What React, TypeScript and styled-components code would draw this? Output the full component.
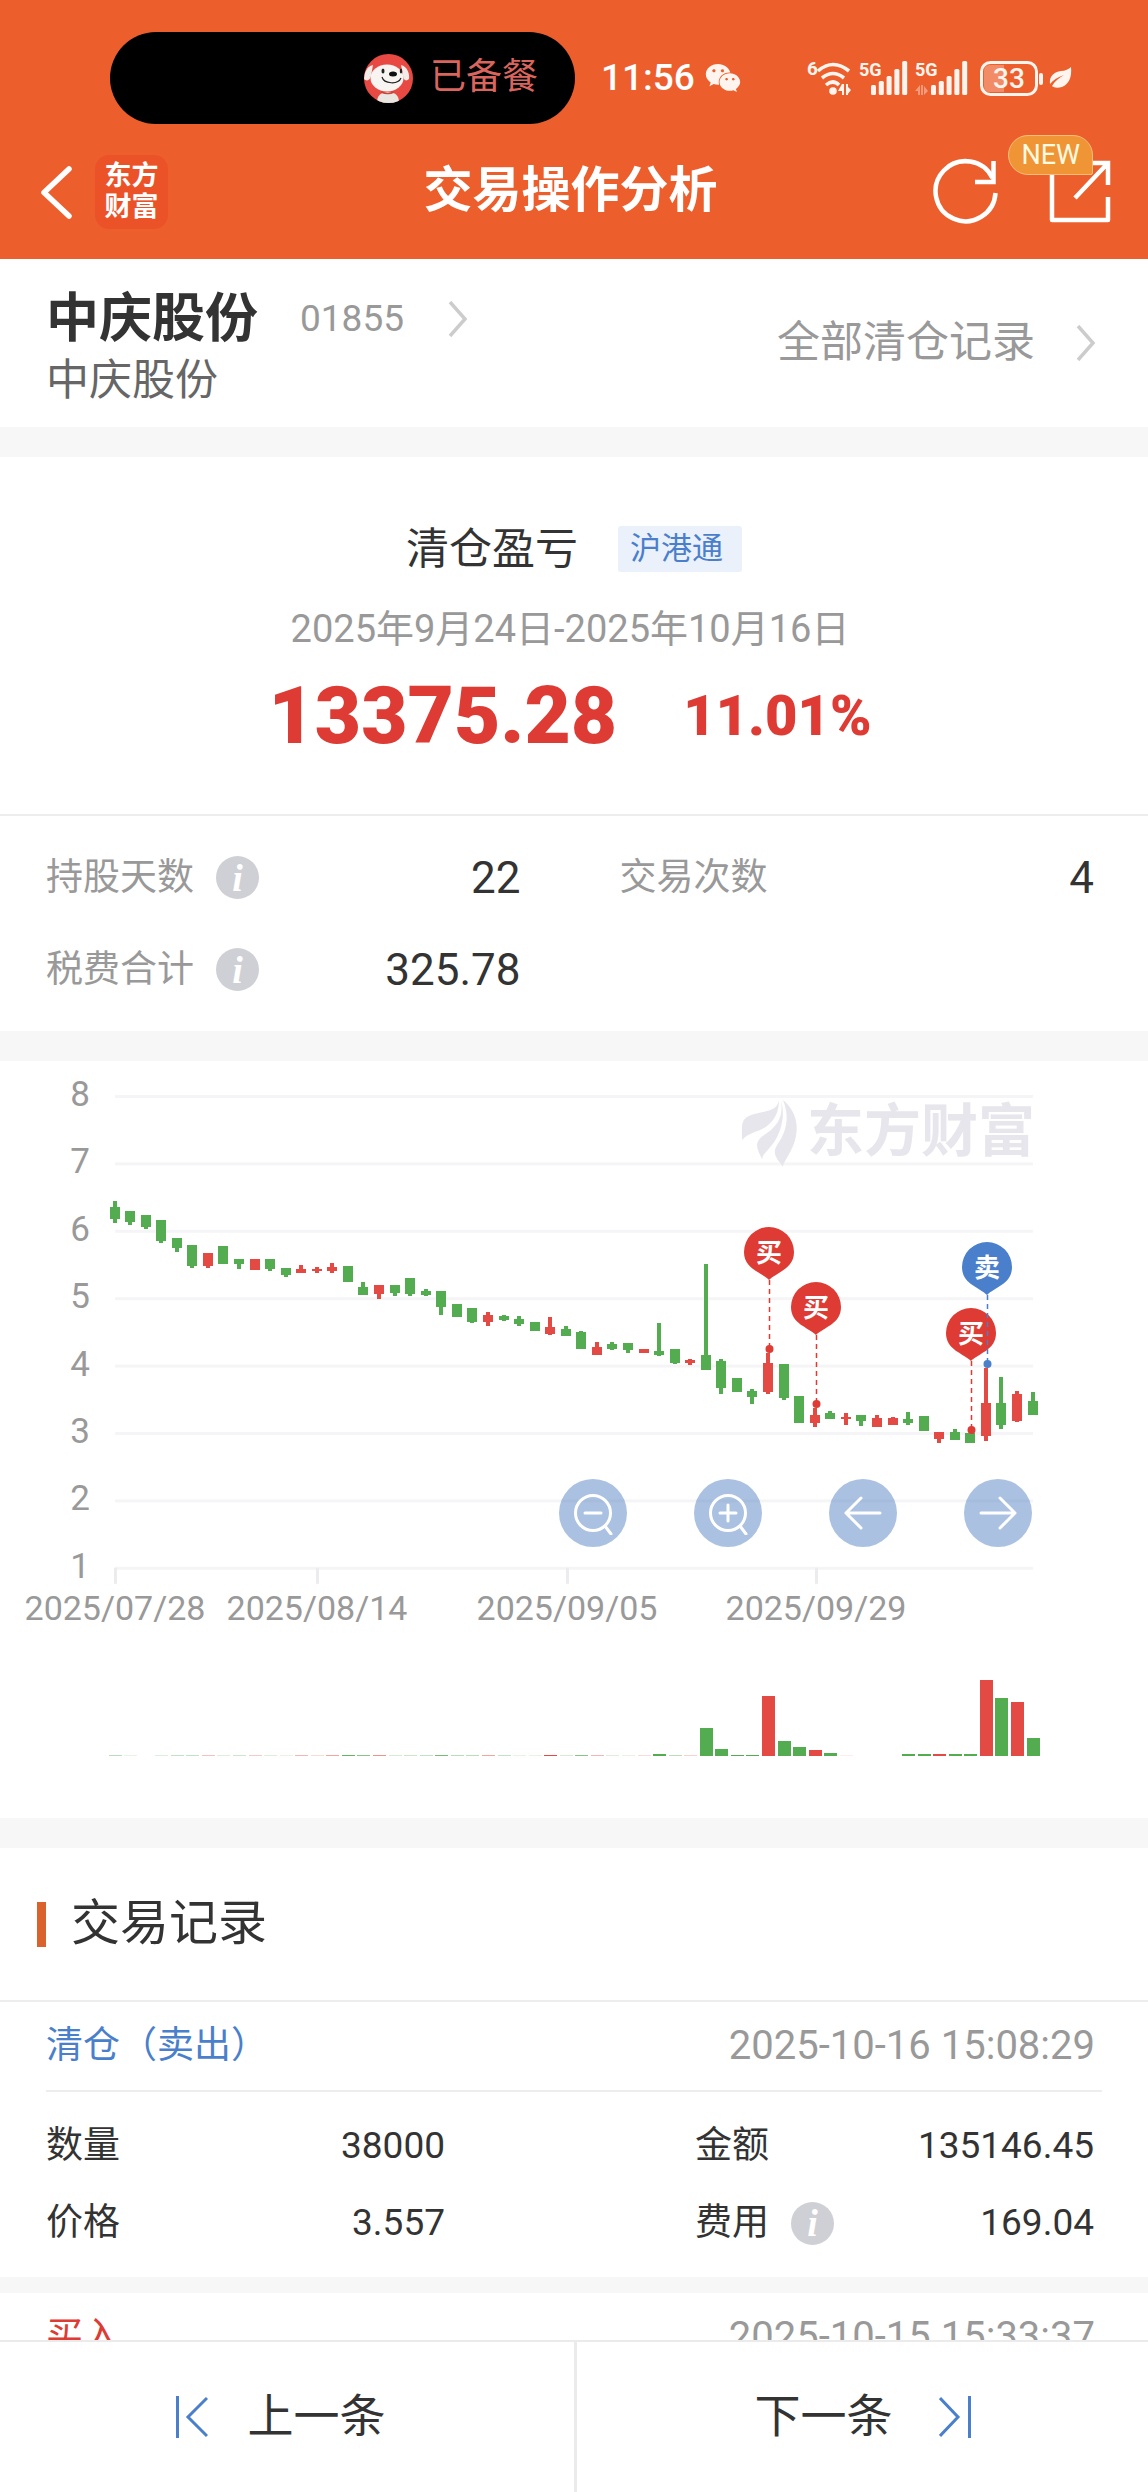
import React from "react";
import styled, { createGlobalStyle } from "styled-components";
import { FaWeixin } from "react-icons/fa";

const C = {
  brand: "#ec5f2d",
  red: "#dd3b33",
  blue: "#4a7fcb",
  candleRed: "#e34a43",
  candleGreen: "#54ac50",
  ink: "#333333",
  sub: "#666666",
  muted: "#999999",
  line: "#ededed",
  band: "#f7f7f7",
};

const FONT = 'Roboto, "Noto Sans CJK SC", sans-serif';

const GlobalStyle = createGlobalStyle`
  *, *::before, *::after { box-sizing: border-box; }
  body { margin: 0; background: #fff; color: ${C.ink}; font-family: ${FONT}; line-height: 1.2; }
  h1, h2, h3, p, dl, dd, dt { margin: 0; font-weight: 400; }
  button { border: 0; padding: 0; background: none; font: inherit; color: inherit; cursor: pointer; }
  a { color: inherit; text-decoration: none; }
  svg { display: block; flex: none; }
`;

const Page = styled.div`
  display: flex;
  flex-direction: column;
  height: 100vh;
  background: #fff;
`;

/* ---------- header ---------- */

const Header = styled.header`
  flex: none;
  background: ${C.brand};
  color: #fff;
`;

const StatusBar = styled.div`
  display: flex;
  align-items: center;
  padding: 32px 76px 0 110px;
`;

const Island = styled.div`
  display: flex;
  align-items: center;
  justify-content: flex-end;
  gap: 17px;
  width: 465px;
  height: 92px;
  padding-right: 37px;
  border-radius: 46px;
  background: #000;
  color: #d9655f;
  font-size: 36px;
`;

const Clock = styled.time`
  margin-left: 26px;
  margin-right: 10px;
  font-size: 37px;
  font-weight: 500;
`;

const Signals = styled.div`
  margin-left: auto;
`;

const NavBar = styled.nav`
  display: grid;
  grid-template-columns: 1fr auto 1fr;
  align-items: center;
  height: 135px;
  padding: 0 36px 0 29px;
`;

const NavGroup = styled.div<{ $end?: boolean }>`
  display: flex;
  align-items: center;
  gap: ${(p) => (p.$end ? 48 : 15)}px;
  justify-content: ${(p) => (p.$end ? "flex-end" : "flex-start")};
`;

const Logo = styled.span`
  display: flex;
  flex-direction: column;
  align-items: center;
  justify-content: center;
  width: 73px;
  height: 74px;
  border-radius: 14px;
  background: #ec5228;
  font-size: 27px;
  font-weight: 700;
  line-height: 31px;
`;

const Title = styled.h1`
  font-size: 49px;
  font-weight: 700;
`;

const ShareButton = styled.button`
  position: relative;
`;

const NewBadge = styled.span`
  position: absolute;
  right: 19px;
  top: -25px;
  height: 40px;
  padding: 0 12px;
  border: 1px solid #f9bd78;
  border-radius: 20px 20px 2px 20px;
  background: #f09536;
  color: #fffbe0;
  font-size: 27px;
  line-height: 38px;
`;

/* ---------- content ---------- */

const Content = styled.main`
  flex: 1;
  min-height: 0;
  overflow: hidden auto;
  scrollbar-width: none;
`;

const Band = styled.div<{ $thin?: boolean }>`
  height: ${(p) => (p.$thin ? 16 : 30)}px;
  background: ${C.band};
`;

const StockBar = styled.section`
  display: flex;
  align-items: center;
  justify-content: space-between;
  height: 168px;
  padding: 0 52px 0 46px;
`;

const StockText = styled.div`
  padding-top: 6px;
`;

const StockLink = styled.a`
  display: flex;
  align-items: center;
`;

const StockName = styled.h2`
  font-size: 53px;
  font-weight: 700;
  line-height: 68px;
`;

const StockCode = styled.span`
  margin: 0 44px 0 42px;
  color: ${C.muted};
  font-size: 37px;
`;

const StockAlias = styled.p`
  color: ${C.sub};
  font-size: 43px;
  line-height: 54px;
`;

const AllRecords = styled.a`
  display: flex;
  align-items: center;
  gap: 41px;
  color: ${C.muted};
  font-size: 43px;
`;

const Summary = styled.section`
  display: flex;
  flex-direction: column;
  align-items: center;
  padding: 69px 0 50px;
  border-bottom: 2px solid ${C.line};
`;

const SummaryHead = styled.div`
  display: flex;
  align-items: center;
  gap: 40px;
  line-height: 46px;
`;

const SummaryTitle = styled.h2`
  font-size: 43px;
`;

const Tag = styled.span`
  padding: 0 19px 0 12px;
  border-radius: 3px;
  background: #eaf1fb;
  color: ${C.blue};
  font-size: 31px;
`;

const Period = styled.p`
  margin: 32px 0 14px;
  padding-right: 8px;
  color: ${C.muted};
  font-size: 38px;
  line-height: 50px;
`;

const Figures = styled.div`
  display: flex;
  align-items: center;
  gap: 66px;
  padding-right: 8px;
  color: ${C.red};
  font-weight: 700;
  line-height: 96px;
`;

const Profit = styled.strong`
  font-size: 80px;
`;

const Rate = styled.strong`
  font-size: 56px;
`;

const Pairs = styled.dl<{ $row: number; $gap: number }>`
  display: grid;
  grid-template-columns: 1fr 1fr;
  grid-auto-rows: ${(p) => p.$row}px;
  column-gap: ${(p) => p.$gap}px;
  padding: 16px 54px 15px 46px;
`;

const Pair = styled.div`
  display: flex;
  align-items: center;
  justify-content: space-between;
`;

const Label = styled.dt<{ $muted?: boolean }>`
  display: flex;
  align-items: center;
  gap: 22px;
  font-size: 37px;
  color: ${(p) => (p.$muted ? C.muted : C.ink)};
`;

const Value = styled.dd<{ $large?: boolean }>`
  font-size: ${(p) => (p.$large ? 44 : 37)}px;
`;

const InfoButton = styled.button`
  width: 43px;
  height: 43px;
  border-radius: 50%;
  background: #cfd0d5;
  color: #fff;
  font: italic 700 38px/40px "Liberation Serif", serif;
`;

/* ---------- chart ---------- */

const ChartPanel = styled.section`
  position: relative;
`;

const ChartSvg = styled.svg`
  width: 100%;
  height: auto;
  font-family: ${FONT};
`;

const Controls = styled.div`
  position: absolute;
  top: 418px;
  right: 116px;
  display: flex;
  gap: 67px;
`;

const RoundButton = styled.button`
  display: grid;
  place-items: center;
  width: 68px;
  height: 68px;
  border-radius: 50%;
  background: rgba(70, 120, 190, 0.46);
`;

/* ---------- records ---------- */

const SectionTitle = styled.h2`
  display: flex;
  align-items: center;
  gap: 25px;
  height: 154px;
  padding-left: 37px;
  border-bottom: 2px solid ${C.line};
  font-size: 49px;

  &::before {
    content: "";
    width: 9px;
    height: 45px;
    background: #d9622d;
  }
`;

const RecordHead = styled.div`
  display: flex;
  align-items: center;
  justify-content: space-between;
  height: 90px;
  margin: 0 46px;
  padding-right: 7px;
  border-bottom: 2px solid ${C.line};
`;

const RecordKind = styled.h3<{ $color: string }>`
  color: ${(p) => p.$color};
  font-size: 37px;
`;

const RecordTime = styled.time`
  color: ${C.muted};
  font-size: 40px;
`;

const Footer = styled.footer`
  flex: none;
  display: grid;
  grid-template-columns: 1fr 1fr;
  height: 152px;
  border-top: 2px solid #ebebeb;
  background: #fff;
`;

const PagerButton = styled.button`
  display: flex;
  align-items: center;
  justify-content: center;
  gap: 40px;
  font-size: 46px;
  padding: 0 13px 0 0;

  & + & {
    gap: 46px;
    padding: 0;
    border-left: 3px solid #ebebeb;
  }
`;

/* ---------- data ---------- */

type Candle = [high: number, top: number, bottom: number, low: number, up: 0 | 1, volume: number];

const CANDLES: Candle[] = [
  [140, 146, 158, 162, 0, 0.4], [150, 150, 161, 164, 0, 0.15], [154, 154, 166, 168, 0, 0],
  [159, 159, 180, 182, 0, 0.2], [177, 177, 187, 191, 0, 0.35], [184, 184, 205, 207, 0, 0.35],
  [192, 192, 205, 207, 1, 0.35], [185, 185, 203, 203, 0, 0.2], [198, 198, 203, 208, 0, 0.3],
  [198, 198, 209, 209, 1, 0.3], [198, 198, 208, 210, 0, 0.2], [207, 207, 214, 216, 0, 0.15],
  [204, 208, 212, 212, 1, 0.4], [206, 208, 210, 212, 1, 0.2], [202, 206, 210, 212, 1, 0.5],
  [205, 205, 221, 221, 0, 0.9], [221, 226, 234, 234, 0, 0.7], [224, 224, 233, 238, 1, 0.6],
  [224, 224, 232, 235, 0, 0.25], [217, 217, 233, 235, 0, 0.3], [228, 230, 234, 235, 0, 0.35],
  [230, 230, 246, 254, 0, 0.8], [243, 243, 256, 256, 0, 0.4], [247, 247, 261, 262, 0, 0.4],
  [251, 254, 261, 265, 1, 0.5], [254, 255, 259, 260, 0, 0.35], [255, 258, 263, 265, 0, 0.15],
  [261, 261, 270, 270, 0, 0.15], [256, 266, 273, 274, 1, 1], [265, 268, 275, 275, 0, 0.25],
  [270, 271, 288, 288, 0, 0.7], [281, 286, 294, 294, 1, 0.4], [281, 283, 288, 289, 0, 0.2],
  [282, 282, 289, 292, 0, 0.15], [288, 288, 292, 292, 1, 0.2], [262, 290, 294, 295, 0, 2],
  [288, 288, 302, 303, 0, 0.4], [298, 299, 302, 304, 1, 0.25], [203, 294, 309, 309, 0, 28],
  [298, 300, 327, 333, 0, 7], [317, 317, 331, 331, 0, 1], [328, 330, 336, 343, 0, 1],
  [292, 302, 331, 333, 1, 60], [303, 303, 337, 339, 0, 15], [335, 335, 362, 362, 0, 9],
  [347, 354, 362, 366, 1, 6], [350, 352, 358, 358, 0, 3], [352, 356, 358, 364, 1, 0.1],
  [354, 354, 360, 365, 0, 0], [354, 357, 366, 366, 1, 0], [356, 357, 364, 364, 1, 0],
  [351, 358, 362, 364, 0, 2], [355, 355, 370, 370, 0, 2], [371, 371, 378, 382, 1, 2],
  [368, 371, 379, 379, 0, 2], [372, 372, 382, 382, 0, 2], [307, 342, 375, 380, 1, 76],
  [316, 342, 364, 368, 0, 58], [330, 333, 360, 361, 1, 54], [331, 340, 354, 354, 0, 18],
];

const X0 = 115;
const STEP = 15.56;
const TOP = 35;
const ROW = 67.4;
const BASE = TOP + ROW * 7;
const VOLUME_BASE = 695;

const TICKS = [
  { x: 115, text: "2025/07/28" },
  { x: 317, text: "2025/08/14" },
  { x: 567, text: "2025/09/05" },
  { x: 816, text: "2025/09/29" },
];

const PINS = [
  { x: 769, y: 191, dot: 288, text: "买", color: C.red },
  { x: 816, y: 246, dot: 343, text: "买", color: C.red },
  { x: 971, y: 272, dot: 369, text: "买", color: C.red },
  { x: 987, y: 206, dot: 303, text: "卖", color: C.blue },
];

/* ---------- icons ---------- */

const Avatar = () => (
  <svg width="49" height="49" viewBox="0 0 49 49" aria-hidden="true">
    <defs>
      <clipPath id="avatar"><circle cx="24.5" cy="24.5" r="24.5" /></clipPath>
    </defs>
    <g clipPath="url(#avatar)">
      <rect width="49" height="49" fill="#e84a43" />
      <path d="M13 49c0-7 3-11 11-11s11 4 11 11z" fill="#e9e5e0" />
      <path d="M17 38q7 3 13 0" stroke="#c8453e" strokeWidth="1.5" fill="none" />
      <path d="M9 11C3 12 0 19 0 25c3 3 6 1 7-3zM37 11c6 1 9 9 8 14-3 3-6 1-6-4z" fill="#f2ece8" />
      <ellipse cx="23" cy="24" rx="16.500" ry="13.500" fill="#f8f4f1" />
      <ellipse cx="29" cy="20" rx="4" ry="2.500" fill="#111" />
      <ellipse cx="19" cy="17" rx="1.500" ry="2.500" fill="#222" />
      <ellipse cx="37" cy="17" rx="1.200" ry="2.500" fill="#222" />
      <path d="M18 23c2 7 16 8 19 1" stroke="#222" strokeWidth="1.200" fill="none" />
    </g>
  </svg>
);

const SignalIcons = () => (
  <svg width="265" height="36" viewBox="0 0 265 36" fill="#fff5ee" fontFamily={FONT} aria-hidden="true">
    <text x="0" y="15" fontSize="19" fontWeight="700">6</text>
    <g fill="none" stroke="#fff5ee" strokeWidth="3.600">
      <path d="M11 11Q26-2 42 11" />
      <path d="M15 18Q26 9 37 18" />
      <path d="M19 25Q26 19 32 25" />
    </g>
    <circle cx="26" cy="31" r="3.800" />
    <path d="M31 31h4v-7zM35 24h2v11h-2zM39 24h2v11h-2zM40 35v-9l4 4z" />
    <text x="52" y="16" fontSize="18" fontWeight="700">5G</text>
    <text x="108" y="16" fontSize="18" fontWeight="700">5G</text>
    {[64, 124].map((x) => (
      <g key={x}>
        {[10, 14, 19, 26, 34].map((h, i) => (
          <rect key={h} x={x + i * 7.8} y={35 - h} width="5" height={h} rx="1.500" />
        ))}
      </g>
    ))}
    <path opacity=".4" d="M108 31l5-6v10h-2v-4zM116 25v10h-2V25zM117 35V26l4 5z" />
    <rect x="174.500" y="2.500" width="55" height="32" rx="9" fill="none" stroke="#fff5ee" strokeWidth="3" />
    <path d="M183 5h14v27h-14q-6 0-6-6V11q0-6 6-6z" opacity=".3" />
    <text x="202" y="28" fontSize="28" fontWeight="500" textAnchor="middle">33</text>
    <rect x="232" y="13" width="4" height="12" rx="2" />
    <path d="M264 7c1 10-2 17-9 20-4 1-8 1-10-1 3-5 7-8 12-11-6 2-11 5-14 9-1-8 4-12 11-13 4 0 8-2 10-4z" />
  </svg>
);

const BackIcon = () => (
  <svg width="51" height="60" viewBox="0 0 51 60" fill="none" stroke="#fff" strokeWidth="5.500" strokeLinecap="round" strokeLinejoin="round" aria-hidden="true">
    <path d="M40 7L15 30.500 40 54" />
  </svg>
);

const RefreshIcon = () => (
  <svg width="68" height="68" viewBox="0 0 68 68" fill="none" stroke="#fff" strokeWidth="4.500" aria-hidden="true">
    <path d="M63.500 35A30 30 0 1 1 60.500 20" />
    <path d="M61.500 3v21H43" />
  </svg>
);

const ShareIcon = () => (
  <svg width="64" height="64" viewBox="0 0 64 64" fill="none" stroke="#fff" strokeWidth="4.500" strokeLinejoin="round" aria-hidden="true">
    <path d="M34 3H4v57h56V37" />
    <path d="M40 3h20v22M60 3L27 38" strokeLinejoin="miter" />
  </svg>
);

const Chevron = () => (
  <svg width="20" height="36" viewBox="0 0 20 36" fill="none" stroke="#cccccc" strokeWidth="3.500" aria-hidden="true">
    <path d="M2 1l15 17L2 35" />
  </svg>
);

const ControlIcon = ({ d, lens }: { d: string; lens?: boolean }) => (
  <svg width="44" height="44" viewBox="0 0 44 44" fill="none" stroke="#fff" strokeWidth="3" strokeLinecap="round" strokeLinejoin="round" aria-hidden="true">
    {lens && <circle cx="22" cy="22" r="17.500" />}
    <path d={d} />
  </svg>
);

const StepIcon = ({ next }: { next?: boolean }) => (
  <svg width="32" height="42" viewBox="0 0 32 42" fill="none" stroke={C.blue} strokeWidth="3" aria-hidden="true">
    <path d={next ? "M30.500 0v42M1 2l18 19L1 40" : "M1.500 0v42M31 2L12 21l19 19"} />
  </svg>
);

const Info = ({ about }: { about: string }) => (
  <InfoButton type="button" aria-label={`${about}说明`}>i</InfoButton>
);

/* ---------- chart drawing ---------- */

const Watermark = () => (
  <g fill="#e6e6ec">
    <path d="M779 39c-1 6-4 9-12 11-13 4-25 3-25 17v12c7-8 17-8 25-14 9-7 12-16 12-26z" />
    <path d="M781 40c2 12-1 21-10 29-6 5-12 7-14 14 0 6 3 10 5 15 1-6 9-11 14-20 6-11 9-25 5-38z" />
    <path d="M783 39c6 14 4 27-1 37-4 8-8 10-7 17 1 5 6 9 8 13 0-6 10-15 13-31 3-15-3-28-13-36z" />
    <text x="807" y="90" fontSize="57" fontWeight="700">东方财富</text>
  </g>
);

const PriceChart = () => (
  <ChartSvg viewBox="0 0 1148 757" role="img" aria-label="股价走势与买卖点">
    {Array.from({ length: 8 }, (_, i) => (
      <g key={i}>
        <rect x={X0} y={TOP + i * ROW - 1} width="918" height="3" fill="#f5f5f7" />
        <text x="90" y={TOP + i * ROW + 10} fontSize="35" fill={C.muted} textAnchor="end">{8 - i}</text>
      </g>
    ))}
    {TICKS.map((t) => (
      <g key={t.text}>
        <rect x={t.x - 1} y={BASE} width="3" height="16" fill="#ececee" />
        <text x={t.x} y="559" fontSize="34" fill={C.muted} textAnchor="middle">{t.text}</text>
      </g>
    ))}
    <Watermark />
    {CANDLES.map(([high, top, bottom, low, up, volume], i) => {
      const x = Math.round(X0 - 0.5 + i * STEP);
      return (
        <g key={i} fill={up ? C.candleRed : C.candleGreen}>
          <rect x={x - 2} y={high} width="4" height={low - high} />
          <rect x={x - 5} y={top} width="10" height={bottom - top} />
          <rect x={x - 6} y={VOLUME_BASE - volume} width="13" height={volume} />
        </g>
      );
    })}
    {PINS.map((p) => (
      <g key={`${p.x}`} fill={p.color}>
        <path d={`M${p.x} ${p.y + 28}C${p.x - 8} ${p.y + 20} ${p.x - 25} ${p.y + 17} ${p.x - 25} ${p.y}a25 25 0 0 1 50 0C${p.x + 25} ${p.y + 17} ${p.x + 8} ${p.y + 20} ${p.x} ${p.y + 28}z`} />
        <path d={`M${p.x + 0.5} ${p.y + 28}V${p.dot}`} stroke={p.color} strokeWidth="1.500" strokeDasharray="5 4" />
        <circle cx={p.x + 0.5} cy={p.dot} r="4" />
        <text x={p.x} y={p.y + 10} fontSize="26" fontWeight="700" fill="#fff" textAnchor="middle">{p.text}</text>
      </g>
    ))}
  </ChartSvg>
);

/* ---------- page ---------- */

export default function App() {
  return (
    <Page>
      <GlobalStyle />
      <Header>
        <StatusBar>
          <Island>
            <Avatar />
            <span>已备餐</span>
          </Island>
          <Clock>11:56</Clock>
          <FaWeixin size={36} color="#fff5ee" />
          <Signals>
            <SignalIcons />
          </Signals>
        </StatusBar>
        <NavBar>
          <NavGroup>
            <button type="button" aria-label="返回"><BackIcon /></button>
            <Logo>
              <span>东方</span>
              <span>财富</span>
            </Logo>
          </NavGroup>
          <Title>交易操作分析</Title>
          <NavGroup $end>
            <button type="button" aria-label="刷新"><RefreshIcon /></button>
            <ShareButton type="button" aria-label="分享">
              <ShareIcon />
              <NewBadge>NEW</NewBadge>
            </ShareButton>
          </NavGroup>
        </NavBar>
      </Header>

      <Content>
        <StockBar>
          <StockText>
            <StockLink href="#stock">
              <StockName>中庆股份</StockName>
              <StockCode>01855</StockCode>
              <Chevron />
            </StockLink>
            <StockAlias>中庆股份</StockAlias>
          </StockText>
          <AllRecords href="#records">
            全部清仓记录
            <Chevron />
          </AllRecords>
        </StockBar>
        <Band />

        <Summary>
          <SummaryHead>
            <SummaryTitle>清仓盈亏</SummaryTitle>
            <Tag>沪港通</Tag>
          </SummaryHead>
          <Period>2025年9月24日-2025年10月16日</Period>
          <Figures>
            <Profit>13375.28</Profit>
            <Rate>11.01%</Rate>
          </Figures>
        </Summary>
        <Pairs $row={92} $gap={99}>
          <Pair>
            <Label $muted>持股天数<Info about="持股天数" /></Label>
            <Value $large>22</Value>
          </Pair>
          <Pair>
            <Label $muted>交易次数</Label>
            <Value $large>4</Value>
          </Pair>
          <Pair>
            <Label $muted>税费合计<Info about="税费合计" /></Label>
            <Value $large>325.78</Value>
          </Pair>
        </Pairs>
        <Band />

        <ChartPanel>
          <PriceChart />
          <Controls>
            <RoundButton type="button" aria-label="缩小"><ControlIcon lens d="M14 22h16M34 35l6 8" /></RoundButton>
            <RoundButton type="button" aria-label="放大"><ControlIcon lens d="M14 22h16M22 14v16M34 35l6 8" /></RoundButton>
            <RoundButton type="button" aria-label="向左"><ControlIcon d="M39 22H5M20 7L5 22l15 15" /></RoundButton>
            <RoundButton type="button" aria-label="向右"><ControlIcon d="M5 22h34M24 7l15 15-15 15" /></RoundButton>
          </Controls>
        </ChartPanel>
        <Band />

        <section id="records">
          <SectionTitle>交易记录</SectionTitle>
          <RecordHead>
            <RecordKind $color={C.blue}>清仓（卖出）</RecordKind>
            <RecordTime>2025-10-16 15:08:29</RecordTime>
          </RecordHead>
          <Pairs $row={77} $gap={250}>
            <Pair><Label>数量</Label><Value>38000</Value></Pair>
            <Pair><Label>金额</Label><Value>135146.45</Value></Pair>
            <Pair><Label>价格</Label><Value>3.557</Value></Pair>
            <Pair><Label>费用<Info about="费用" /></Label><Value>169.04</Value></Pair>
          </Pairs>
          <Band $thin />
          <RecordHead>
            <RecordKind $color={C.red}>买入</RecordKind>
            <RecordTime>2025-10-15 15:33:37</RecordTime>
          </RecordHead>
        </section>
      </Content>

      <Footer>
        <PagerButton type="button"><StepIcon />上一条</PagerButton>
        <PagerButton type="button">下一条<StepIcon next /></PagerButton>
      </Footer>
    </Page>
  );
}
